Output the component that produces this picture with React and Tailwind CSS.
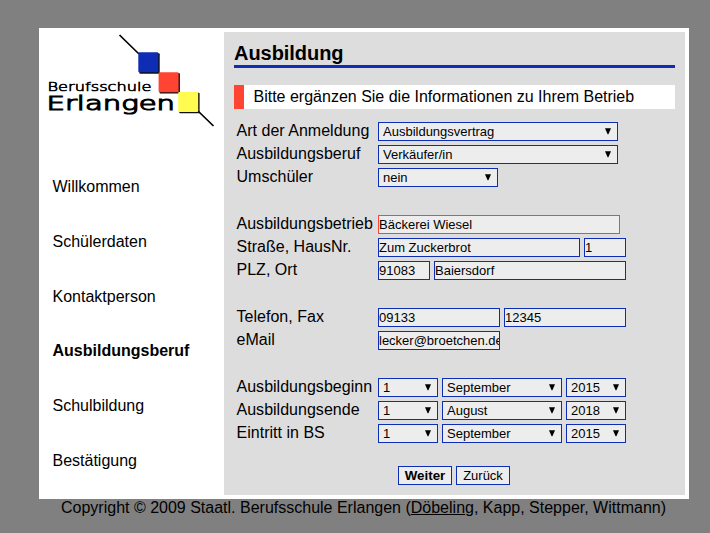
const NAV = ['Willkommen', 'Schülerdaten', 'Kontaktperson', 'Ausbildungsberuf', 'Schulbildung', 'Bestätigung'];

function Logo() {
  return (
    <svg className="block h-[132px] w-[185px]" viewBox="39 28 185 132">
      <path d="M119.5 35 139 54M198 111l15.5 15" stroke="#000" strokeWidth="1.7" />
      <g fill="#111">
        <rect x="139.3" y="53.3" width="20.4" height="20.4" rx="1" />
        <rect x="159.5" y="73" width="20.4" height="20.4" rx="1" />
        <rect x="179.2" y="92.8" width="20.4" height="20.4" rx="1" />
      </g>
      <rect x="138.3" y="52.3" width="20" height="20" rx="1" fill="#0c2db4" />
      <rect x="158.6" y="72.2" width="20" height="20" rx="1" fill="#ff4433" />
      <rect x="178.2" y="92" width="20" height="20" rx="1" fill="#fffb50" />
      <g className="font-['DejaVu_Sans',sans-serif] font-extralight" fill="#000" stroke="#000">
        <text x="47.5" y="91" fontSize="12.8" textLength="104" lengthAdjust="spacingAndGlyphs" strokeWidth="0.65">Berufsschule</text>
        <text x="46.5" y="110.3" fontSize="19.8" textLength="128.5" lengthAdjust="spacingAndGlyphs" strokeWidth="1.2">Erlangen</text>
      </g>
    </svg>
  );
}

function Row({ label, gap, children }) {
  return (
    <div className={`flex h-[23px] items-start pl-[2.5px] ${gap ? 'mt-6' : ''}`}>
      <div className="-mt-0.5 w-[141.5px] shrink-0 whitespace-nowrap leading-[22px] tracking-[0.02px]">{label}</div>
      <div className="flex gap-1">{children}</div>
    </div>
  );
}

function Input({ value, width, error }) {
  return (
    <div className={`h-[19px] overflow-hidden whitespace-nowrap border bg-[#ededed] text-[13px] leading-[18px] ${width} ${error ? 'border-[#ff4433]' : 'border-[#0c2db4]'}`}>
      {value}
    </div>
  );
}

function Select({ value, width }) {
  return (
    <div className={`flex h-[19px] justify-between whitespace-nowrap border border-[#0c2db4] bg-[#ededed] pl-1 pr-[6px] text-[13px] leading-[18px] ${width}`}>
      <span>{value}</span>
      <svg className="mt-[5px] h-[7px] w-[6px]" viewBox="0 0 6 7">
        <path d="M0 .3h6L3.4 6.2h-.8z" />
      </svg>
    </div>
  );
}

function DateRow({ label, gap, day, month, year }) {
  return (
    <Row label={label} gap={gap}>
      <Select value={day} width="w-[60px]" />
      <Select value={month} width="w-[120px]" />
      <Select value={year} width="w-[60px]" />
    </Row>
  );
}

export default function App() {
  return (
    <div className="h-[533px] w-[710px] overflow-hidden bg-[#808080] pl-[39px] pt-7 font-['Liberation_Sans',Arial,sans-serif] text-base text-black">
      <div className="flex h-[471px] w-[650px] bg-white">
        <aside className="w-[185px]">
          <Logo />
          <nav className="flex flex-col pl-[13.5px]">
            {NAV.map((item) => (
              <a key={item} className={`h-[54.8px] leading-[54px] ${item === 'Ausbildungsberuf' ? 'font-bold' : ''}`}>{item}</a>
            ))}
          </nav>
        </aside>
        <main className="my-1 w-[461px] bg-[#dddddd] px-[10px]">
          <h1 className="h-9 border-b-[3px] border-[#0c2db4] pt-[9px] text-xl font-bold leading-6 tracking-[-0.05px]">Ausbildung</h1>
          <div className="mt-[17px] h-6 border-l-[10px] border-[#ff4433] bg-white pl-[9.5px] leading-6">
            Bitte ergänzen Sie die Informationen zu Ihrem Betrieb
          </div>
          <div className="mt-[13px]">
            <Row label="Art der Anmeldung"><Select value="Ausbildungsvertrag" width="w-[240px]" /></Row>
            <Row label="Ausbildungsberuf"><Select value="Verkäufer/in" width="w-[240px]" /></Row>
            <Row label="Umschüler"><Select value="nein" width="w-[120px]" /></Row>
            <Row label="Ausbildungsbetrieb" gap><Input value="Bäckerei Wiesel" width="w-[242px]" error /></Row>
            <Row label="Straße, HausNr.">
              <Input value="Zum Zuckerbrot" width="w-[202px]" />
              <Input value="1" width="w-[42px]" />
            </Row>
            <Row label="PLZ, Ort">
              <Input value="91083" width="w-[52px]" />
              <Input value="Baiersdorf" width="w-[192px]" />
            </Row>
            <Row label="Telefon, Fax" gap>
              <Input value="09133" width="w-[122px]" />
              <Input value="12345" width="w-[122px]" />
            </Row>
            <Row label="eMail"><Input value="lecker@broetchen.de" width="w-[122px]" /></Row>
            <DateRow label="Ausbildungsbeginn" gap day="1" month="September" year="2015" />
            <DateRow label="Ausbildungsende" day="1" month="August" year="2018" />
            <DateRow label="Eintritt in BS" day="1" month="September" year="2015" />
          </div>
          <div className="mt-[19px] flex gap-1 pl-[164px] text-[13.333px]">
            <button className="h-[19px] w-[54px] border border-[#0c2db4] bg-[#ededed] font-bold leading-[18px]">Weiter</button>
            <button className="h-[19px] w-[54px] border border-[#0c2db4] bg-[#ededed] text-[13px] leading-[18px]">Zurück</button>
          </div>
        </main>
      </div>
      <footer className="w-[650px] whitespace-nowrap pl-[22px] leading-[18px]">
        Copyright © 2009 Staatl. Berufsschule Erlangen (<a className="underline">Döbeling</a>, Kapp, Stepper, Wittmann)
      </footer>
    </div>
  );
}
